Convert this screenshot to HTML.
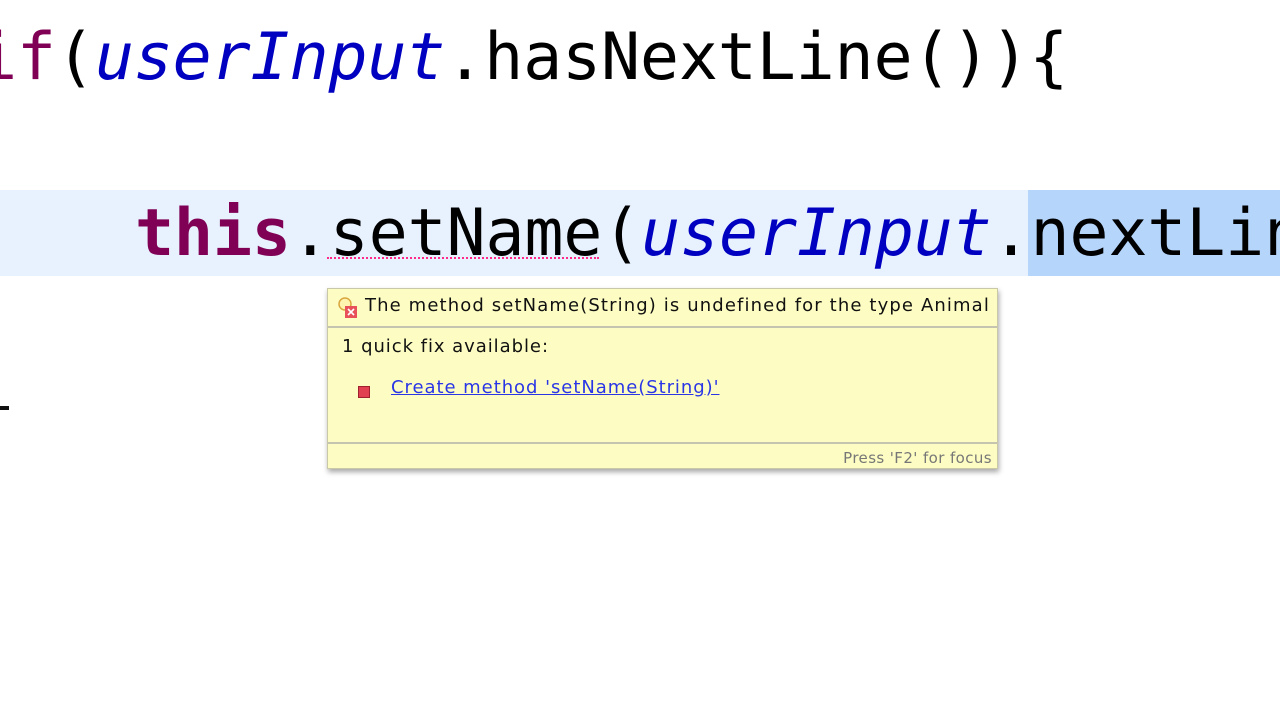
<!DOCTYPE html>
<html><head><meta charset="utf-8"><style>
html,body{margin:0;width:1280px;height:720px;overflow:hidden;background:#fff;position:relative}
.code{position:absolute;font-family:"DejaVu Sans Mono","Liberation Mono",monospace;font-size:65px;white-space:pre;line-height:85px;letter-spacing:-0.2px}
.kw{color:#7f0055;font-weight:bold}
.kn{color:#7f0055}
.fl{color:#0000c0;font-style:italic}
.hl{position:absolute;left:0;top:190px;width:1280px;height:86px;background:#e8f2fe}
.sel{position:absolute;left:1028px;top:190px;width:252px;height:86px;background:#b5d5fb}
.und{position:absolute;left:327px;top:257px;width:272px;height:0;border-top:2px dotted #ff2a8a}
.tip{position:absolute;left:327px;top:288px;width:669px;height:179px;background:#fdfdc3;border:1px solid #c9c9a8;box-shadow:1px 3px 5px rgba(0,0,0,.35);font-family:"DejaVu Sans","Liberation Sans",sans-serif;color:#111;white-space:nowrap}
.tip .h{position:absolute;left:37px;top:6px;font-size:18px;letter-spacing:1.12px}
.tip .s1{position:absolute;left:0;right:0;top:37px;border-top:2px solid #c4c4b0}
.tip .s2{position:absolute;left:0;right:0;top:153px;border-top:2px solid #c4c4b0}
.tip .q{position:absolute;left:14px;top:47px;font-size:18px;letter-spacing:0.95px}
.tip .a{position:absolute;left:63px;top:88px;font-size:18px;letter-spacing:0.95px;color:#2a36e6;text-decoration:underline}
.tip .f{position:absolute;right:5px;top:160px;font-size:15px;letter-spacing:0.4px;color:#777}
.tip .b{position:absolute;left:30px;top:97px;width:10px;height:10px;background:#e04050;border:1px solid #a02030}
</style></head><body>
<div class="hl"></div><div class="sel"></div>
<div class="code" style="left:-22px;top:15px"><span class="kn">if</span>(<span class="fl">userInput</span>.hasNextLine()){</div>
<div class="code" style="left:135px;top:191px"><span class="kw">this</span>.setName(<span class="fl">userInput</span>.nextLine</div>
<div class="und"></div>
<div style="position:absolute;left:0;top:406px;width:9px;height:4px;background:#111"></div>
<div class="tip">
<svg style="position:absolute;left:8px;top:8px" width="24" height="22"><circle cx="9" cy="7" r="6" fill="#fff3b0" stroke="#d9a640" stroke-width="1.5"/><rect x="9" y="9" width="12" height="12" fill="#e8505a"/><path d="M12 12l6 6M18 12l-6 6" stroke="#fff" stroke-width="1.6"/></svg>
<div class="h">The method setName(String) is undefined for the type Animal</div>
<div class="s1"></div>
<div class="q">1 quick fix available:</div>
<div class="b"></div>
<div class="a">Create method 'setName(String)'</div>
<div class="s2"></div>
<div class="f">Press 'F2' for focus</div>
</div>
</body></html>
